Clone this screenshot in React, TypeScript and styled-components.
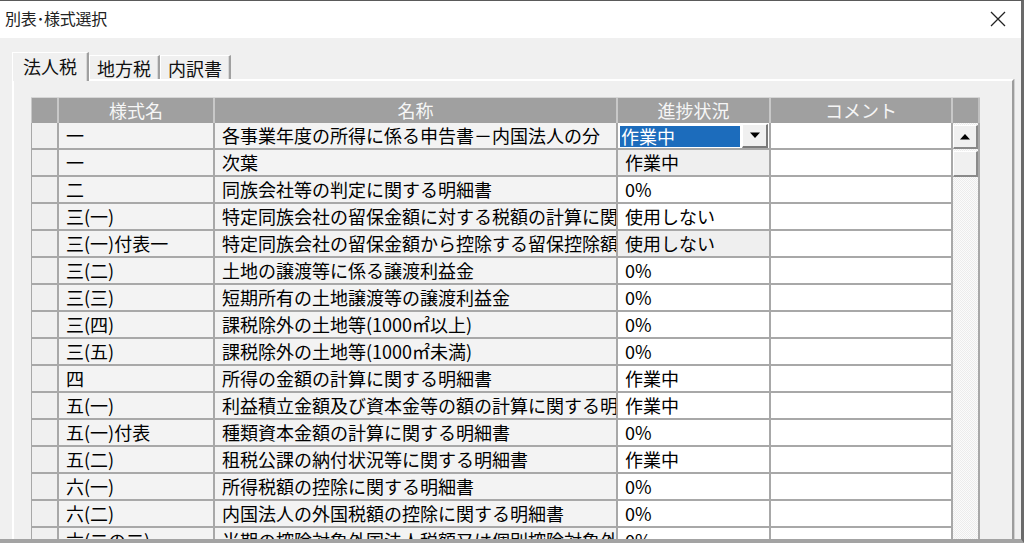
import React from "react";
import styled, { createGlobalStyle } from "styled-components";

// styled-components----------------------------------------------------------------

const GlobalStyle = createGlobalStyle`
  html, body {
    margin: 0;
    padding: 0;
    background: #f0f0f0;
  }
  body {
    font-family: "Noto Sans CJK JP", "Noto Sans", sans-serif;
    color: #000;
  }
`;

const Window = styled.div`
  width: 1024px;
  height: 543px;
  box-sizing: border-box;
  border-top: 1px solid #5a5a5a;
  border-right: 3px solid #6a6a6a;
  border-bottom: 4px solid #a3a3a3;
  display: flex;
  flex-direction: column;
  overflow: hidden;
  background: #f0f0f0;
`;

const TitleBar = styled.div`
  height: 37px;
  flex: none;
  background: #fff;
  display: flex;
  align-items: center;
  justify-content: space-between;
  padding: 0 14px 0 5px;
`;

const Title = styled.span`
  font-size: 16px;
  color: #222;
  letter-spacing: -0.3px;
  margin-top: -3px;
`;

const CloseButton = styled.div`
  width: 18px;
  height: 18px;
  display: flex;
  align-items: center;
  justify-content: center;
  margin-top: -2px;
`;

const Body = styled.div`
  flex: 1;
  min-height: 0;
  padding: 14px 7px 0 12px;
  display: flex;
  flex-direction: column;
`;

const TabStrip = styled.div`
  display: flex;
  align-items: flex-end;
  height: 27px;
  flex: none;
  position: relative;
  z-index: 1;
`;

const Tab = styled.div<{ $active?: boolean }>`
  box-sizing: border-box;
  height: ${(p) => (p.$active ? "29px" : "24px")};
  margin-bottom: ${(p) => (p.$active ? "-2px" : "0")};
  padding: ${(p) => (p.$active ? "2px 10px 0 10px" : "1px 7px 0 7px")};
  font-size: 18px;
  line-height: 22px;
  background: #f0f0f0;
  border-top: 1px solid #fff;
  border-left: 1px solid #fff;
  border-right: 2px solid #a0a0a0;
  box-shadow: inset -1px 0 0 #d8d8d8;
  white-space: nowrap;
  color: #111;
`;

const Panel = styled.div`
  flex: 1;
  min-height: 0;
  border-top: 2px solid #fff;
  border-left: 2px solid #fff;
  border-right: 2px solid #9c9c9c;
  box-shadow: 1px 0 0 #d0d0d0;
  padding: 16px 0 0 17px;
  overflow: hidden;
`;

const Grid = styled.div`
  width: 949px;
  display: flex;
  flex-direction: column;
`;

const HeaderRow = styled.div`
  display: grid;
  grid-template-columns: 28px 156px 403px 153px 182px 27px;
  height: 26px;
  background: #a0a0a0;
  border-top: 1px solid #d6d6d6;
  box-sizing: border-box;
`;

const HeaderCell = styled.div<{ $last?: boolean }>`
  border-right: ${(p) => (p.$last ? "2px solid #c0c0c0" : "2px solid #c8c8c8")};
  color: #f6f6f6;
  font-size: 18px;
  line-height: 24px;
  text-align: center;
  white-space: nowrap;
  overflow: hidden;
  &:first-child {
    border-left: 1px solid #c8c8c8;
  }
`;

const Content = styled.div`
  display: flex;
  align-items: flex-start;
`;

const Rows = styled.div`
  display: grid;
  grid-template-columns: 28px 156px 403px 153px 182px;
  grid-auto-rows: 27px;
`;

const Cell = styled.div<{ $bg?: string; $pad?: number }>`
  box-sizing: border-box;
  background: ${(p) => p.$bg || "#fff"};
  border-right: 2px solid #a8a8a8;
  border-bottom: 2px solid #a8a8a8;
  padding-left: ${(p) => (p.$pad ?? 7)}px;
  font-size: 18px;
  line-height: 25px;
  white-space: nowrap;
  overflow: hidden;
`;

const RowHead = styled(Cell)`
  border-left: 1px solid #a8a8a8;
  background: #f0f0f0;
  padding: 0;
`;

const ComboCell = styled(Cell)`
  padding: 1px 1px 0 2px;
  display: flex;
  align-items: flex-start;
  gap: 2px;
  background: #fff;
`;

const ComboValue = styled.div`
  flex: 1;
  height: 21px;
  margin-top: 2px;
  background: #1c6cbc;
  color: #fff;
  font-size: 18px;
  line-height: 21px;
  padding-left: 1px;
`;

const ComboButton = styled.div`
  width: 26px;
  height: 24px;
  box-sizing: border-box;
  background: #f0f0f0;
  border-top: 1px solid #fff;
  border-left: 1px solid #fff;
  border-right: 2px solid #7a7a7a;
  border-bottom: 2px solid #7a7a7a;
  display: flex;
  align-items: center;
  justify-content: center;
`;

const Scrollbar = styled.div`
  width: 27px;
  height: 440px;
  box-sizing: border-box;
  border-right: 2px solid #a8a8a8;
  padding-top: 2px;
  display: flex;
  flex-direction: column;
  background: repeating-conic-gradient(#fbfbfb 0 25%, #ececec 0 50%) 0 0 / 2px 2px;
`;

const ScrollButton = styled.div<{ $h: number }>`
  height: ${(p) => p.$h}px;
  box-sizing: border-box;
  background: #f0f0f0;
  border-top: 1px solid #fff;
  border-left: 1px solid #fff;
  border-right: 2px solid #8a8a8a;
  border-bottom: 2px solid #8a8a8a;
  display: flex;
  align-items: center;
  justify-content: center;
  margin-bottom: 2px;
`;

// ---------------------------------------------------------------------------------

type RowType = {
  code: string;
  name: string;
  status: string;
  locked?: boolean;
  combo?: boolean;
};

const rows: RowType[] = [
  { code: "一", name: "各事業年度の所得に係る申告書－内国法人の分", status: "作業中", combo: true },
  { code: "一", name: "次葉", status: "作業中", locked: true },
  { code: "二", name: "同族会社等の判定に関する明細書", status: "0%" },
  { code: "三(一)", name: "特定同族会社の留保金額に対する税額の計算に関する明細書", status: "使用しない" },
  { code: "三(一)付表一", name: "特定同族会社の留保金額から控除する留保控除額の計算に関する明細書", status: "使用しない", locked: true },
  { code: "三(二)", name: "土地の譲渡等に係る譲渡利益金", status: "0%" },
  { code: "三(三)", name: "短期所有の土地譲渡等の譲渡利益金", status: "0%" },
  { code: "三(四)", name: "課税除外の土地等(1000㎡以上)", status: "0%" },
  { code: "三(五)", name: "課税除外の土地等(1000㎡未満)", status: "0%" },
  { code: "四", name: "所得の金額の計算に関する明細書", status: "作業中" },
  { code: "五(一)", name: "利益積立金額及び資本金等の額の計算に関する明細書", status: "作業中" },
  { code: "五(一)付表", name: "種類資本金額の計算に関する明細書", status: "0%" },
  { code: "五(二)", name: "租税公課の納付状況等に関する明細書", status: "作業中" },
  { code: "六(一)", name: "所得税額の控除に関する明細書", status: "0%" },
  { code: "六(二)", name: "内国法人の外国税額の控除に関する明細書", status: "0%" },
  { code: "六(二の二)", name: "当期の控除対象外国法人税額又は個別控除対象外国法人税額に関する明細書", status: "0%" },
];

const headers = ["", "様式名", "名称", "進捗状況", "コメント", ""];

const Arrow: React.FC<{ up?: boolean }> = ({ up }) => (
  <svg width="12" height="7" viewBox="0 0 12 7">
    <path d={up ? "M1 6.5 L6 1 L11 6.5 Z" : "M1 0.5 L6 6 L11 0.5 Z"} fill="#000" />
  </svg>
);

export default function App() {
  return (
    <>
      <GlobalStyle />
      <Window>
        <TitleBar>
          <Title>別表･様式選択</Title>
          <CloseButton>
            <svg width="16" height="16" viewBox="0 0 16 16">
              <path d="M1 1 L15 15 M15 1 L1 15" stroke="#222" strokeWidth="1.3" />
            </svg>
          </CloseButton>
        </TitleBar>
        <Body>
          <TabStrip>
            <Tab $active>法人税</Tab>
            <Tab>地方税</Tab>
            <Tab>内訳書</Tab>
          </TabStrip>
          <Panel>
            <Grid>
              <HeaderRow>
                {headers.map((h, i) => (
                  <HeaderCell key={i} $last={i === headers.length - 1}>
                    {h}
                  </HeaderCell>
                ))}
              </HeaderRow>
              <Content>
                <Rows>
                  {rows.map((r, i) => (
                    <React.Fragment key={i}>
                      <RowHead />
                      <Cell $bg="#f3f3f3">{r.code}</Cell>
                      <Cell $bg="#f3f3f3">{r.name}</Cell>
                      {r.combo ? (
                        <ComboCell>
                          <ComboValue>{r.status}</ComboValue>
                          <ComboButton>
                            <Arrow />
                          </ComboButton>
                        </ComboCell>
                      ) : (
                        <Cell $bg={r.locked ? "#efefef" : "#fff"}>{r.status}</Cell>
                      )}
                      <Cell />
                    </React.Fragment>
                  ))}
                </Rows>
                <Scrollbar>
                  <ScrollButton $h={24}>
                    <Arrow up />
                  </ScrollButton>
                  <ScrollButton $h={26} />
                </Scrollbar>
              </Content>
            </Grid>
          </Panel>
        </Body>
      </Window>
    </>
  );
}
